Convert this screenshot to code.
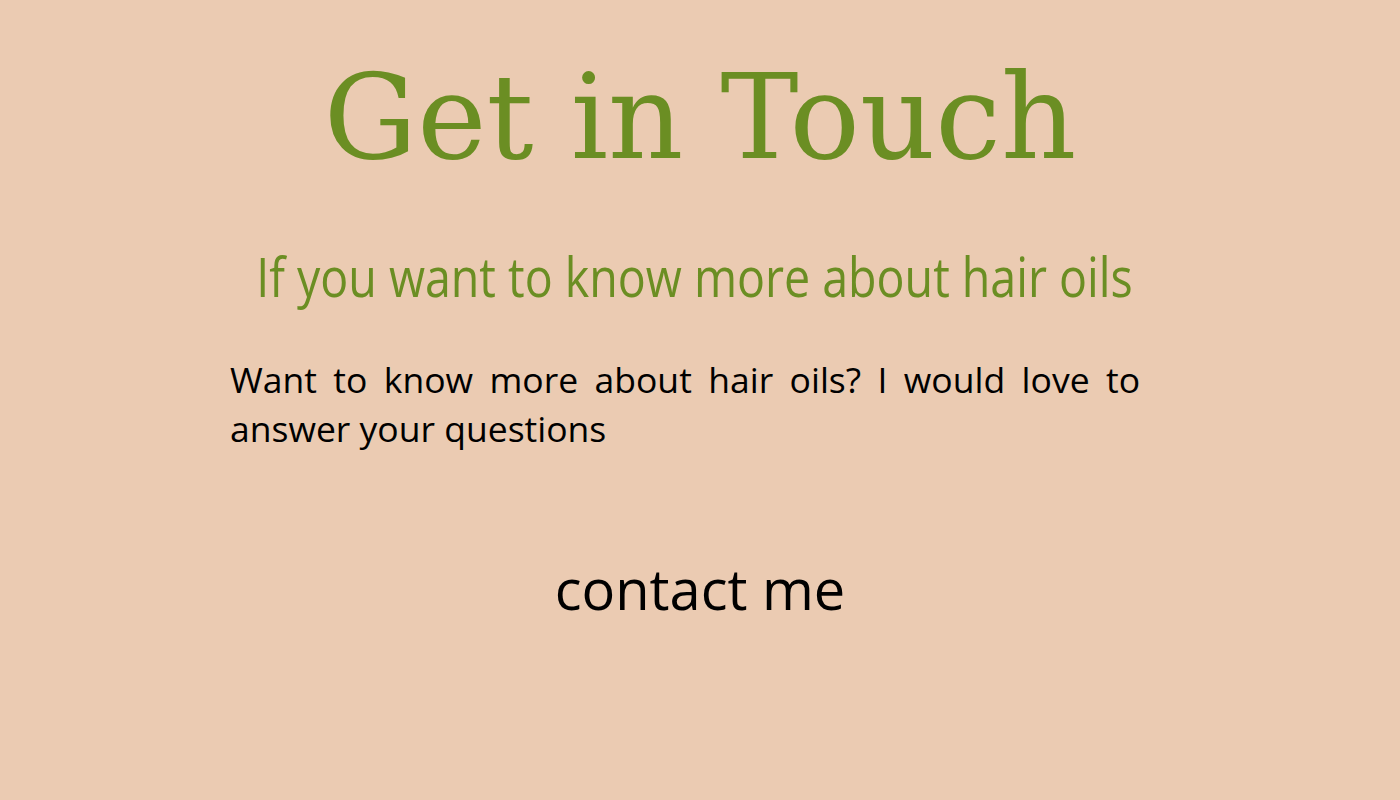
import React from "react";

export default function App() {
  return (
    <div className="min-h-[800px] w-full bg-[#ebcbb2] font-['Open_Sans',sans-serif]">
      <h1 className="pt-[46px] text-center font-['DejaVu_Serif',serif] text-[117px] leading-[144px] text-[#6b8e23]">
        Get in Touch
      </h1>
      <h2 className="mt-[51px] pr-[12px] text-center text-[54px] leading-[70px] text-[#6b8e23]">
        <span className="inline-block origin-center scale-x-[0.862] whitespace-nowrap">
          If you want to know more about hair oils
        </span>
      </h2>
      <p className="ml-[230px] mt-[44px] w-[910px] text-justify text-[35.5px] leading-[49px] text-black">
        Want to know more about hair oils? I would love to answer your
        questions
      </p>
      <div className="mt-[97px] text-center text-[56px] leading-[76px] text-black">
        contact me
      </div>
    </div>
  );
}
